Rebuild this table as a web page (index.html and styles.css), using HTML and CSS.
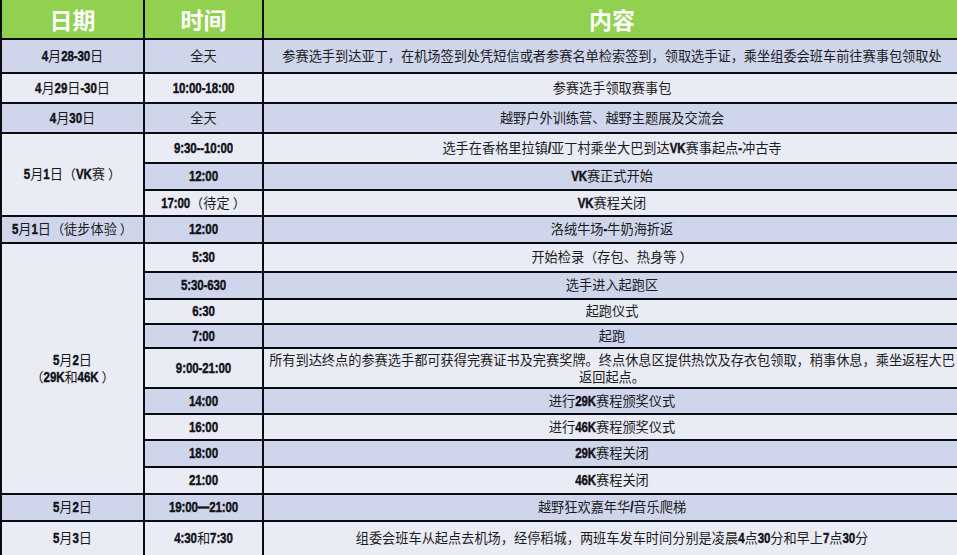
FILE: index.html
```html
<!DOCTYPE html>
<html lang="zh-CN">
<head>
<meta charset="utf-8">
<title>赛程安排</title>
<link rel="stylesheet" href="styles.css">
</head>
<body>
<table class="sched">
  <colgroup>
    <col class="c-date">
    <col class="c-time">
    <col class="c-content">
  </colgroup>
  <thead>
    <tr class="head">
      <th>日期</th>
      <th>时间</th>
      <th>内容</th>
    </tr>
  </thead>
  <tbody>
    <tr class="h34 dk">
      <td><span class="n">4</span>月<span class="n">28-30</span>日</td>
      <td>全天</td>
      <td>参赛选手到达亚丁，在机场签到处凭短信或者参赛名单检索签到，领取选手证，乘坐组委会班车前往赛事包领取处</td>
    </tr>
    <tr class="h30 lt">
      <td><span class="n">4</span>月<span class="n">29</span>日<span class="n">-30</span>日</td>
      <td><span class="n">10:00-18:00</span></td>
      <td>参赛选手领取赛事包</td>
    </tr>
    <tr class="h30 dk">
      <td><span class="n">4</span>月<span class="n">30</span>日</td>
      <td>全天</td>
      <td>越野户外训练营、越野主题展及交流会</td>
    </tr>
    <tr class="h30 lt">
      <td rowspan="3" class="light"><span class="n">5</span>月<span class="n">1</span>日（<span class="n">VK</span>赛<span class="pc">）</span></td>
      <td><span class="n">9:30--10:00</span></td>
      <td>选手在香格里拉镇<span class="n">/</span>亚丁村乘坐大巴到达<span class="n">VK</span>赛事起点<span class="n">-</span>冲古寺</td>
    </tr>
    <tr class="h27 dk">
      <td><span class="n">12:00</span></td>
      <td><span class="n">VK</span>赛正式开始</td>
    </tr>
    <tr class="h26 lt">
      <td><span class="n">17:00</span>（待定<span class="pc">）</span></td>
      <td><span class="n">VK</span>赛程关闭</td>
    </tr>
    <tr class="h27 dk">
      <td><span class="n">5</span>月<span class="n">1</span>日（徒步体验<span class="pc">）</span></td>
      <td><span class="n">12:00</span></td>
      <td>洛绒牛场<span class="n">-</span>牛奶海折返</td>
    </tr>
    <tr class="h29 lt">
      <td rowspan="9" class="light"><span class="n">5</span>月<span class="n">2</span>日<br>（<span class="n">29K</span>和<span class="n">46K</span><span class="pc">）</span></td>
      <td><span class="n">5:30</span></td>
      <td>开始检录（存包、热身等<span class="pc">）</span></td>
    </tr>
    <tr class="h27 dk">
      <td><span class="n">5:30-630</span></td>
      <td>选手进入起跑区</td>
    </tr>
    <tr class="h25 lt">
      <td><span class="n">6:30</span></td>
      <td>起跑仪式</td>
    </tr>
    <tr class="h24 dk">
      <td><span class="n">7:00</span></td>
      <td>起跑</td>
    </tr>
    <tr class="h40 lt">
      <td><span class="n">9:00-21:00</span></td>
      <td class="wrap">所有到达终点的参赛选手都可获得完赛证书及完赛奖牌。终点休息区提供热饮及存衣包领取，稍事休息，乘坐返程大巴返回起点。</td>
    </tr>
    <tr class="h26 dk">
      <td><span class="n">14:00</span></td>
      <td>进行<span class="n">29K</span>赛程颁奖仪式</td>
    </tr>
    <tr class="h26 lt">
      <td><span class="n">16:00</span></td>
      <td>进行<span class="n">46K</span>赛程颁奖仪式</td>
    </tr>
    <tr class="h27 dk">
      <td><span class="n">18:00</span></td>
      <td><span class="n">29K</span>赛程关闭</td>
    </tr>
    <tr class="h27 lt">
      <td><span class="n">21:00</span></td>
      <td><span class="n">46K</span>赛程关闭</td>
    </tr>
    <tr class="h27 dk">
      <td><span class="n">5</span>月<span class="n">2</span>日</td>
      <td><span class="n">19:00—21:00</span></td>
      <td>越野狂欢嘉年华<span class="n">/</span>音乐爬梯</td>
    </tr>
    <tr class="h35 lt">
      <td><span class="n">5</span>月<span class="n">3</span>日</td>
      <td><span class="n">4:30</span>和<span class="n">7:30</span></td>
      <td>组委会班车从起点去机场，经停稻城，两班车发车时间分别是凌晨<span class="n">4</span>点<span class="n">30</span>分和早上<span class="n">7</span>点<span class="n">30</span>分</td>
    </tr>
  </tbody>
</table>
</body>
</html>
```

FILE: styles.css
```css
html, body {
  margin: 0;
  padding: 0;
  background: #e9ebf5;
  overflow: hidden;
}

body {
  font-family: "Noto Sans CJK SC", "Microsoft YaHei", sans-serif;
  color: #1b1b22;
}

.sched {
  border-collapse: collapse;
  table-layout: fixed;
  width: 960px;
}

.c-date { width: 143px; }
.c-time { width: 119px; }
.c-content { width: 698px; }

.sched th,
.sched td {
  border: 2px solid #0b0b12;
  padding: 0 1px;
  text-align: center;
  vertical-align: middle;
  font-size: 13.2px;
  line-height: 1.25;
  white-space: nowrap;
  overflow: hidden;
}

.sched td.wrap {
  white-space: normal;
  line-height: 1.3;
}

.head th {
  border-top: 0;
  height: 38px;
  background: #92d050;
  color: #ffffff;
  font-size: 23px;
  font-weight: bold;
  line-height: 1;
}

.dk td { background: #cfd5ea; }
.lt td { background: #e9ebf5; }
.sched td.light { background: #e9ebf5; }

/* condensed heavy numerals: a small bold face stretched vertically */
.n {
  display: inline-block;
  font-family: "Liberation Sans", Arial, sans-serif;
  font-weight: bold;
  font-size: 11.5px;
  line-height: 1;
  letter-spacing: -0.1px;
  color: #121218;
  transform: scaleY(1.3);
  transform-origin: 50% 85%;
  -webkit-text-stroke: 0.35px #121218;
}

.pc {
  padding-left: 3px;
}

.h24 { height: 24px; }
.h25 { height: 25px; }
.h26 { height: 26px; }
.h27 { height: 27px; }
.h29 { height: 29px; }
.h30 { height: 30px; }
.h34 { height: 34px; }
.h35 { height: 35px; }
.h40 { height: 40px; }
```
